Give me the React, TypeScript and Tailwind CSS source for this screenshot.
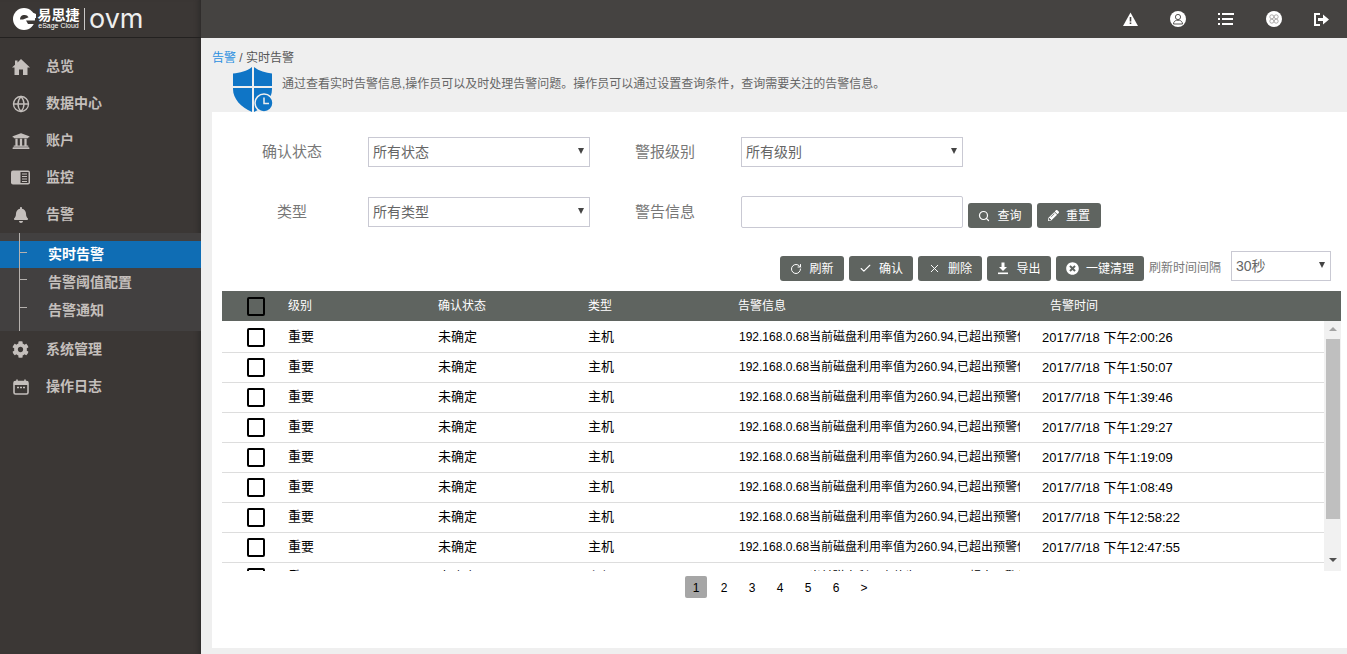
import { Check, Globe, RotateCw, Search, X } from "lucide-react";
import type { ReactNode } from "react";
import { FaBell, FaCog, FaPencilAlt, FaTimesCircle, FaUniversity } from "react-icons/fa";

const LogoMark = () => (
  <svg width="23" height="22" viewBox="0 0 23 22" className="shrink-0">
    <circle cx="11" cy="11" r="11" fill="#fff" />
    <path d="M7 11.500a4.600 4.600 0 0 1 8.600-2.200L10 11.500Z" fill="#3b3735" />
    <path d="M13 12.500h10v3.500h-8Z" fill="#3b3735" />
    <path d="M16 3l7 3v4l-5 1Z" fill="#fff" />
  </svg>
);

const HomeIcon = () => (
  <svg width="18" height="16" viewBox="0 0 18 16">
    <path d="M9 0L18 8.500H15.500V16H11V10.500H7V16H2.500V8.500H0L3 5.700V1.500H5.500V3.400Z" fill="#c4bfbc" />
  </svg>
);

const NewsIcon = () => (
  <svg width="19" height="15" viewBox="0 0 19 15">
    <rect x="0" y="0.500" width="19" height="14" rx="2" fill="#c4bfbc" />
    <rect x="9.500" y="2" width="8" height="11" fill="#3b3735" />
    <path d="M11 4h5M11 6.500h5M11 9h5M11 11.500h5" stroke="#c4bfbc" strokeWidth="1" />
  </svg>
);

const CalendarIcon = () => (
  <svg width="16" height="16" viewBox="0 0 16 16">
    <rect x="1" y="2.500" width="14" height="12.500" rx="1.500" fill="none" stroke="#c4bfbc" strokeWidth="1.600" />
    <rect x="1" y="2.500" width="14" height="3.500" fill="#c4bfbc" />
    <path d="M4 0.500v3M12 0.500v3" stroke="#c4bfbc" strokeWidth="1.600" />
    <path d="M4 8.500h2M7 8.500h2M10 8.500h2" stroke="#c4bfbc" strokeWidth="1.600" />
  </svg>
);

const ShieldIcon = () => (
  <svg width="42" height="45" viewBox="0 0 42 45" className="shrink-0">
    <path d="M20 0C15 4 8 6 1 6.500V22C1 32 9 40 20 45Z" fill="#0f75c6" />
    <path d="M22 0C27 4 34 6 40 6.500V22C40 32 33 40 22 45Z" fill="#0f75c6" />
    <rect x="0" y="19" width="42" height="2" fill="#efefef" />
    <circle cx="32" cy="36" r="9" fill="#0f75c6" stroke="#efefef" strokeWidth="1.500" />
    <path d="M32 30.500V36.500H37" fill="none" stroke="#efefef" strokeWidth="1.500" />
  </svg>
);

const WarningIcon = () => (
  <svg width="15" height="14" viewBox="0 0 15 14">
    <path d="M7.500 0.500L15 14H0Z" fill="#fff" />
    <path d="M7.500 5v4.500M7.500 10.500v1.500" stroke="#454341" strokeWidth="1.600" />
  </svg>
);

const UserCircleIcon = () => (
  <svg width="16" height="16" viewBox="0 0 16 16">
    <circle cx="8" cy="8" r="8" fill="#fff" />
    <circle cx="8" cy="6" r="2.600" fill="none" stroke="#454341" strokeWidth="0.900" />
    <path d="M3.500 13c0-2.500 2-3.500 3-3.700h3c1 .2 3 1.200 3 3.700Z" fill="none" stroke="#454341" strokeWidth="0.900" />
  </svg>
);

const ListIcon = () => (
  <svg width="16" height="12" viewBox="0 0 16 12">
    <path d="M0 0h2v2H0ZM0 5h2v2H0ZM0 10h2v2H0Z" fill="#fff" />
    <path d="M4 0h12v2H4ZM4 5h11v2H4ZM4 10h11v2H4Z" fill="#fff" />
  </svg>
);

const PetalIcon = () => (
  <svg width="16" height="16" viewBox="0 0 16 16">
    <circle cx="8" cy="8" r="8" fill="#fff" />
    <g fill="none" stroke="#9a9897" strokeWidth="0.800">
      <circle cx="5.800" cy="5.800" r="2" />
      <circle cx="10.200" cy="5.800" r="2" />
      <circle cx="5.800" cy="10.200" r="2" />
      <circle cx="10.200" cy="10.200" r="2" />
    </g>
  </svg>
);

const LogoutIcon = () => (
  <svg width="15" height="13" viewBox="0 0 15 13">
    <path d="M6 1H1v11h5" fill="none" stroke="#fff" strokeWidth="2" />
    <path d="M4 5h5V1.500l6 5-6 5V8H4Z" fill="#fff" />
  </svg>
);

const DownloadIcon = () => (
  <svg width="12" height="13" viewBox="0 0 12 13">
    <path d="M4.500 0.500h3V5H10L6 9 2 5h2.500Z" fill="#fff" />
    <rect x="1" y="10.500" width="10" height="1.600" fill="#fff" />
  </svg>
);

const menuTop: { label: string; icon: ReactNode }[] = [
  { label: "总览", icon: <HomeIcon /> },
  { label: "数据中心", icon: <Globe size={18} strokeWidth={1.800} /> },
  { label: "账户", icon: <FaUniversity size={18} /> },
  { label: "监控", icon: <NewsIcon /> },
  { label: "告警", icon: <FaBell size={16} /> },
];

const menuBottom: { label: string; icon: ReactNode }[] = [
  { label: "系统管理", icon: <FaCog size={17} /> },
  { label: "操作日志", icon: <CalendarIcon /> },
];

const subMenu = ["实时告警", "告警阈值配置", "告警通知"];

const times = [
  "2017/7/18 下午2:00:26",
  "2017/7/18 下午1:50:07",
  "2017/7/18 下午1:39:46",
  "2017/7/18 下午1:29:27",
  "2017/7/18 下午1:19:09",
  "2017/7/18 下午1:08:49",
  "2017/7/18 下午12:58:22",
  "2017/7/18 下午12:47:55",
  "2017/7/18 下午12:37:30",
];

const MenuItem = ({ label, icon }: { label: string; icon: ReactNode }) => (
  <div className="flex h-[37px] items-center text-[#c4bfbc]">
    <span className="flex w-[46px] justify-center pr-[5px]">{icon}</span>
    <span className="text-[14px] font-bold">{label}</span>
  </div>
);

const Sidebar = () => (
  <aside className="flex w-[201px] shrink-0 flex-col bg-[#3b3735] shadow-[inset_-6px_0_6px_-6px_#222]">
    <div className="flex h-[38px] items-center border-b border-[#232120] pl-[13px]">
      <LogoMark />
      <div className="ml-[1px] flex w-[43px] flex-col items-center leading-none text-white">
        <span className="text-[14px] font-bold leading-[14px]">易思捷</span>
        <span className="whitespace-nowrap text-[7px] leading-[8px]">eSage Cloud</span>
      </div>
      <span className="mx-[4px] h-[22px] w-px bg-[#c9c7c6]" />
      <span className="font-['Inter',sans-serif] text-[27px] font-normal leading-none text-[#eeeeee]">ovm</span>
    </div>
    <nav className="pt-[10px]">
      {menuTop.map((item) => (
        <MenuItem key={item.label} {...item} />
      ))}
      <div className="relative h-[98px] bg-[#424040] pt-[8px]">
        <span className="absolute bottom-0 left-[19px] top-0 z-10 w-px bg-[#b5b1ae]" />
        {subMenu.map((label, i) => (
          <div
            key={label}
            className={`relative flex items-center pl-[48px] text-[14px] font-bold ${
              i === 0 ? "h-[27px] bg-[#0f6db4] text-white" : "h-[28px] text-[#c4bfbc]"
            }`}
          >
            <span className="absolute left-[19px] top-[11px] h-px w-[8px] bg-[#b5b1ae]" />
            {label}
          </div>
        ))}
      </div>
      {menuBottom.map((item) => (
        <MenuItem key={item.label} {...item} />
      ))}
    </nav>
  </aside>
);

const TopBar = () => (
  <header className="flex h-[38px] shrink-0 items-center justify-end bg-[#454341] pr-[18px]">
    <div className="flex items-center gap-[32px]">
      <WarningIcon />
      <UserCircleIcon />
      <ListIcon />
      <PetalIcon />
      <LogoutIcon />
    </div>
  </header>
);

const Dropdown = ({ value, width }: { value: string; width: string }) => (
  <div className={`relative h-[30px] ${width}`}>
    <select className="h-full w-full appearance-none border border-[#c9c9d3] bg-white pl-[4px] pt-[1px] text-[14px] text-[#666666]" defaultValue={value}>
      <option>{value}</option>
    </select>
    <span className="absolute right-[6px] top-[11px] h-0 w-0 border-x-[3.500px] border-t-[6px] border-x-transparent border-t-[#444444]" />
  </div>
);

const ActionButton = ({ icon, label, width = "w-[64px]" }: { icon: ReactNode; label: string; width?: string }) => (
  <button className={`flex h-[25px] ${width} items-center justify-center gap-[7px] rounded-[3px] bg-[#5f6460] text-[12px] text-white`}>
    {icon}
    {label}
  </button>
);

const Filters = () => (
  <div className="flex flex-col gap-[29px] pt-[25px]">
    <div className="flex items-center">
      <span className="w-[156px] pl-[4px] text-center text-[15px] text-[#777777]">确认状态</span>
      <Dropdown value="所有状态" width="w-[222px]" />
      <span className="ml-[45px] w-[106px] text-[15px] text-[#777777]">警报级别</span>
      <Dropdown value="所有级别" width="w-[222px]" />
    </div>
    <div className="flex items-center">
      <span className="w-[156px] pl-[4px] text-center text-[15px] text-[#777777]">类型</span>
      <Dropdown value="所有类型" width="w-[222px]" />
      <span className="ml-[45px] w-[106px] text-[15px] text-[#777777]">警告信息</span>
      <input className="h-[32px] w-[222px] rounded-[2px] border border-[#c9c9d3] bg-white" />
      <div className="ml-[5px] mt-[7px] flex gap-[5px]">
        <ActionButton icon={<Search size={12} strokeWidth={2.400} />} label="查询" />
        <ActionButton icon={<FaPencilAlt size={11} />} label="重置" />
      </div>
    </div>
  </div>
);

const Toolbar = () => (
  <div className="mt-[23px] flex h-[30px] items-end justify-end pr-[16px]">
    <div className="flex items-center gap-[5px]">
      <ActionButton icon={<RotateCw size={12} strokeWidth={2} />} label="刷新" />
      <ActionButton icon={<Check size={13} strokeWidth={2} />} label="确认" />
      <ActionButton icon={<X size={13} strokeWidth={1.800} />} label="删除" />
      <ActionButton icon={<DownloadIcon />} label="导出" />
      <ActionButton icon={<FaTimesCircle size={13} />} label="一键清理" width="w-[88px]" />
    </div>
    <span className="mb-[4px] ml-[5px] w-[82px] text-[12px] text-[#777777]">刷新时间间隔</span>
    <Dropdown value="30秒" width="w-[100px]" />
  </div>
);

const Checkbox = () => <span className="block h-[19px] w-[18px] rounded-[2px] border-2 border-black" />;

const AlarmTable = () => (
  <div className="ml-[10px] mr-[6px] mt-[10px]">
    <div className="flex h-[30px] items-center bg-[#5f6460] text-[12px] text-white">
      <span className="w-[66px] pl-[25px]">
        <Checkbox />
      </span>
      <span className="w-[150px]">级别</span>
      <span className="w-[150px]">确认状态</span>
      <span className="w-[150px]">类型</span>
      <span className="w-[312px]">告警信息</span>
      <span>告警时间</span>
    </div>
    <div className="flex h-[250px]">
      <div className="min-w-0 flex-1 overflow-hidden pt-[2px]">
        {times.map((time) => (
          <div key={time} className="flex h-[30px] shrink-0 items-center border-b border-[#dddddd] pb-[1px] text-[13px] text-black">
            <span className="w-[66px] pl-[25px]">
              <Checkbox />
            </span>
            <span className="w-[150px]">重要</span>
            <span className="w-[150px]">未确定</span>
            <span className="w-[150px]">主机</span>
            <span className="w-[304px] pr-[22px]">
              <span className="block overflow-hidden whitespace-nowrap pb-[1px] pl-[1px] text-[12px]">
                192.168.0.68当前磁盘利用率值为260.94,已超出预警值
              </span>
            </span>
            <span className="whitespace-nowrap pt-[1px] text-[13px]">{time}</span>
          </div>
        ))}
      </div>
      <div className="flex w-[17px] shrink-0 flex-col items-center bg-[#f1f1f1]">
        <span className="mt-[6px] h-0 w-0 border-x-[4px] border-b-[4px] border-x-transparent border-b-[#a3a3a3]" />
        <span className="mt-[8px] h-[180px] w-[14px] bg-[#bfbfbf]" />
        <span className="mt-[39px] h-0 w-0 border-x-[4px] border-t-[4px] border-x-transparent border-t-[#505050]" />
      </div>
    </div>
  </div>
);

const Pagination = () => (
  <div className="mt-[5px] flex justify-center pl-[1px] text-[12px] text-black">
    {["1", "2", "3", "4", "5", "6", ">"].map((page, i) => (
      <span
        key={page}
        className={`flex h-[22px] w-[22px] items-center justify-center rounded-[2px] pt-[1px] ${
          i === 0 ? "bg-[#a6a6a6]" : "ml-[6px]"
        }`}
      >
        {page}
      </span>
    ))}
  </div>
);

export default function App() {
  return (
    <div className="flex h-screen overflow-hidden bg-[#efefef] font-['Liberation_Sans','Noto_Sans_CJK_SC',sans-serif]">
      <Sidebar />
      <main className="flex min-w-0 flex-1 flex-col">
        <TopBar />
        <div className="h-[74px] shrink-0 pl-[11px] pt-[13px]">
          <p className="text-[12px] leading-[15px] text-[#555555]">
            <span className="text-[#2b8fe0]">告警</span> / 实时告警
          </p>
          <div className="flex pl-[20px] pt-[1px]">
            <div className="relative z-10">
              <ShieldIcon />
            </div>
            <p className="ml-[8px] mt-[8px] text-[12px] text-[#666666]">
              通过查看实时告警信息,操作员可以及时处理告警问题。操作员可以通过设置查询条件，查询需要关注的告警信息。
            </p>
          </div>
        </div>
        <section className="ml-[11px] h-[536px] shrink-0 bg-white">
          <Filters />
          <Toolbar />
          <AlarmTable />
          <Pagination />
        </section>
      </main>
    </div>
  );
}
